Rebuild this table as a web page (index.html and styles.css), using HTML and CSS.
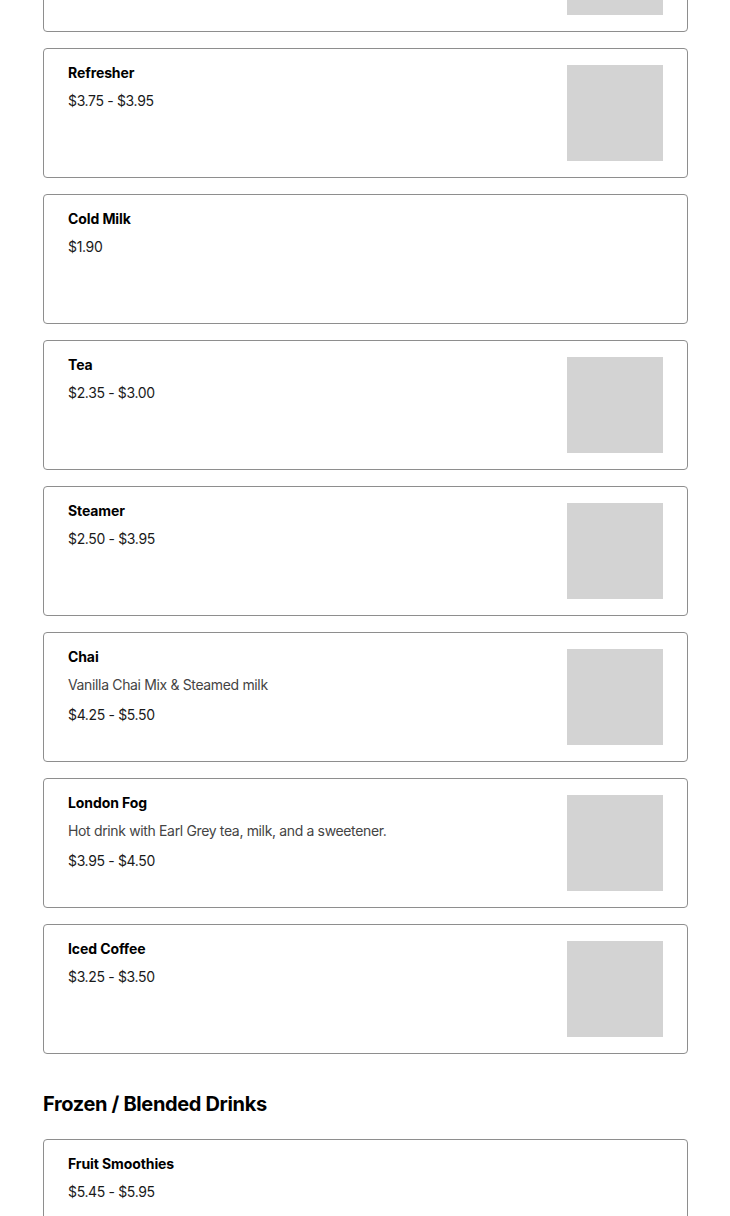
FILE: index.html
```html
<!DOCTYPE html>
<html lang="en">
<head>
<meta charset="utf-8">
<title>Menu</title>
<link rel="stylesheet" href="styles.css">
</head>
<body>
<main class="menu">
  <section class="section">
    <div class="list list-shifted">
      <article class="card">
        <div class="info">
          <h3 class="name">Hot Coffee</h3>
          <p class="price">$2.25 - $2.95</p>
        </div>
        <div class="thumb"></div>
      </article>
      <article class="card">
        <div class="info">
          <h3 class="name">Refresher</h3>
          <p class="price">$3.75 - $3.95</p>
        </div>
        <div class="thumb"></div>
      </article>
      <article class="card">
        <div class="info">
          <h3 class="name">Cold Milk</h3>
          <p class="price">$1.90</p>
        </div>
      </article>
      <article class="card">
        <div class="info">
          <h3 class="name">Tea</h3>
          <p class="price">$2.35 - $3.00</p>
        </div>
        <div class="thumb"></div>
      </article>
      <article class="card">
        <div class="info">
          <h3 class="name">Steamer</h3>
          <p class="price">$2.50 - $3.95</p>
        </div>
        <div class="thumb"></div>
      </article>
      <article class="card">
        <div class="info">
          <h3 class="name">Chai</h3>
          <p class="desc">Vanilla Chai Mix &amp; Steamed milk</p>
          <p class="price">$4.25 - $5.50</p>
        </div>
        <div class="thumb"></div>
      </article>
      <article class="card">
        <div class="info">
          <h3 class="name">London Fog</h3>
          <p class="desc">Hot drink with Earl Grey tea, milk, and a sweetener.</p>
          <p class="price">$3.95 - $4.50</p>
        </div>
        <div class="thumb"></div>
      </article>
      <article class="card">
        <div class="info">
          <h3 class="name">Iced Coffee</h3>
          <p class="price">$3.25 - $3.50</p>
        </div>
        <div class="thumb"></div>
      </article>
    </div>
  </section>
  <section class="section">
    <h2 class="section-title">Frozen / Blended Drinks</h2>
    <div class="list">
      <article class="card">
        <div class="info">
          <h3 class="name">Fruit Smoothies</h3>
          <p class="price">$5.45 - $5.95</p>
        </div>
      </article>
    </div>
  </section>
</main>
</body>
</html>
```
FILE: styles.css
```css
* { box-sizing: border-box; }
html, body { margin: 0; padding: 0; background: #fff; }
body {
  font-family: Inter, "Noto Sans", "Liberation Sans", sans-serif;
  color: #222;
  overflow: hidden;
}
.menu {
  width: 645px;
  margin-left: 43px;
}
.list {
  display: flex;
  flex-direction: column;
  gap: 16px;
}
.list-shifted { margin-top: -98px; }
.card {
  display: flex;
  justify-content: space-between;
  align-items: flex-start;
  min-height: 130px;
  padding: 16px 24px;
  border: 1px solid #8e8e8e;
  border-radius: 4px;
  background: #fff;
}
.info { display: flex; flex-direction: column; }
.name {
  margin: 0 0 12px;
  font-size: 14px;
  line-height: 16px;
  font-weight: 700;
  color: #000;
  letter-spacing: -0.1px;
}
.desc {
  margin: 0 0 14px;
  font-size: 14px;
  line-height: 16px;
  color: #444;
  letter-spacing: -0.35px;
}
.price {
  margin: 0;
  font-size: 14px;
  line-height: 16px;
  color: #1a1a1a;
  letter-spacing: -0.35px;
}
.thumb {
  width: 96px;
  height: 96px;
  flex: none;
  background: #d3d3d3;
}
.section-title {
  margin: 38px 0 23px;
  font-size: 20px;
  line-height: 24px;
  font-weight: 700;
  color: #000;
  letter-spacing: -0.35px;
}
```
